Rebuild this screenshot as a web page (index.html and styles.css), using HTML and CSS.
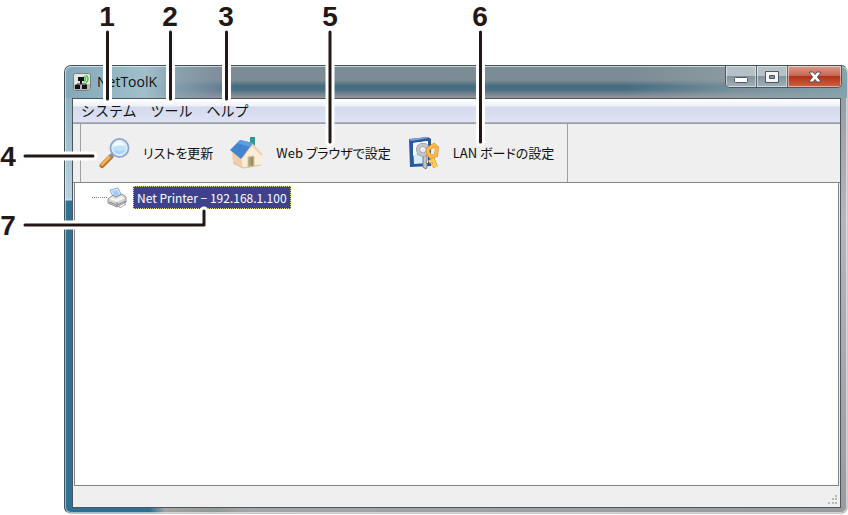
FILE: index.html
```html
<!DOCTYPE html>
<html lang="ja">
<head>
    <meta charset="UTF-8">
    <meta name="viewport" content="width=device-width, initial-scale=1.0">
    <title>NetToolK</title>
    <link rel="stylesheet" href="styles.css">
</head>
<body>

<div class="figure">
    <div class="window">
        <header class="titlebar">
            <svg class="app-icon" width="18" height="18" viewBox="0 0 18 18">
                <rect x="0.5" y="0.5" width="17" height="17" rx="2" fill="#e4e7e3" stroke="#77817f"/>
                <rect x="1" y="11" width="16" height="6" fill="#b4b8b5"/>
                <path d="M5 4h6v4H9v3H7V8H5z" fill="#111"/>
                <path d="M4 13v-2h9v2" fill="none" stroke="#333"/>
                <rect x="2" y="12" width="5" height="4" fill="#111"/>
                <rect x="9" y="12" width="5" height="4" fill="#111"/>
                <path d="M11 3q3 3 0 6M13 2q4 4 0 8" fill="none" stroke="#4fc043" stroke-width="1.5"/>
            </svg>
            <span class="title">NetToolK</span>
            <div class="controls">
                <button type="button" class="control" aria-label="最小化">
                    <svg width="14" height="14" viewBox="0 0 14 14"><rect x="0.5" y="7.5" width="13" height="5" rx="1" fill="#fff" stroke="#50565f"/></svg>
                </button>
                <button type="button" class="control" aria-label="最大化">
                    <svg width="14" height="14" viewBox="0 0 14 14"><path d="M.5 1.500h13v11H.5zM4.500 5.500h5v3h-5z" fill="#f4f4f4" fill-rule="evenodd" stroke="#50565f"/></svg>
                </button>
                <button type="button" class="control close" aria-label="閉じる">
                    <svg width="14" height="14" viewBox="0 0 14 14"><path d="M1.500 2h3.500l2 2.500L9 2h3.500v1L9.500 7l3 4v1H9L7 9.500 5 12H1.500v-1l3-4-3-4z" fill="#fff" stroke="#5a4a52"/></svg>
                </button>
            </div>
        </header>

        <main class="client">
            <nav class="menubar">
                <a href="#">システム</a>
                <a href="#">ツール</a>
                <a href="#">ヘルプ</a>
            </nav>

            <div class="rebar">
                <div class="toolbar">
                    <button type="button" class="tool">
                        <svg width="32" height="32" viewBox="0 0 32 32">
                            <path d="M4 28.500 13 19.500" stroke="#b5702c" stroke-width="5" stroke-linecap="round"/>
                            <path d="M4 27.500 12 19.500" stroke="#f5ad55" stroke-width="3" stroke-linecap="round"/>
                            <path d="m12 20 4-4" stroke="#8a8da0" stroke-width="3"/>
                            <circle cx="21.500" cy="11" r="9" fill="#bfe3f8" stroke="#93a5d0" stroke-width="2"/>
                            <circle cx="21.500" cy="11" r="7.500" fill="none" stroke="#e4f5ff"/>
                            <path d="M15 10q1-6 7-6 4 1 5 5-6-2-12 1" fill="#f2fbff"/>
                            <path d="M17 14q4 3 9 0" fill="none" stroke="#9dd4f3" stroke-width="2"/>
                        </svg>
                        <span>リストを更新</span>
                    </button>
                    <button type="button" class="tool">
                        <svg width="33" height="32" viewBox="0 0 33 32">
                            <path d="M20 0h5v11l-5-4z" fill="#2b9694"/>
                            <path d="M2 13l11 5v13L3 26z" fill="#f3cda8"/>
                            <path d="m11 19 10-13 11 11v12l-19 3z" fill="#fdecd9"/>
                            <path d="m13 31 18-3M3 26l10 5" fill="none" stroke="#c3c9a0"/>
                            <path d="m12 21 10-14 10 11" fill="none" stroke="#efcfae" stroke-width="2"/>
                            <path d="M0 13 10 3l13 3-12 16z" fill="#4384d0"/>
                            <path d="m10 3 13 3-3 4-13-4z" fill="#5f9fe2"/>
                            <path d="m18 20 6-1v10l-6 1z" fill="#a3a574" stroke="#dcc09a"/>
                            <path d="M22 20v9" stroke="#7c8259"/>
                        </svg>
                        <span>Web ブラウザで設定</span>
                    </button>
                    <button type="button" class="tool">
                        <svg width="32" height="34" viewBox="0 0 32 34">
                            <path d="M1 3 20 1l3 2v27L2 31z" fill="#2b579c"/>
                            <path d="m1 3 19-2 1 1-18 3z" fill="#78a4df"/>
                            <path d="m5 7 15-2v22L6 28z" fill="#d8edfc"/>
                            <path d="m5 7 15-2v5L5 20z" fill="#f5fbff"/>
                            <path d="M15 18v13l3 2 1-2v-3l-1-2 1-2v-6" fill="#c6c6ca" stroke="#7c7c83"/>
                            <path d="M10 13q1-4 5-4t5 4l-1 4-4 2-4-2z" fill="none" stroke="#8d8d94" stroke-width="4"/>
                            <path d="M10 13q1-4 5-4t5 4l-1 4-4 2-4-2z" fill="none" stroke="#c5c5ca" stroke-width="3"/>
                            <path d="m23 19 5 12M25 24l-4 2M27 28l-3 2" stroke="#c98a2c" stroke-width="4"/>
                            <path d="m23 19 5 12M25 24l-4 2M27 28l-3 2" stroke="#ffc95b" stroke-width="3"/>
                            <path d="M20 13l6-4 3 3-1 7-5 2-3-4z" fill="none" stroke="#c98a2c" stroke-width="4"/>
                            <path d="M20 13l6-4 3 3-1 7-5 2-3-4z" fill="none" stroke="#fdb944" stroke-width="3"/>
                        </svg>
                        <span>LAN ボードの設定</span>
                    </button>
                </div>
            </div>

            <ul class="tree">
                <li class="node">
                    <span class="branch"></span>
                    <svg width="20" height="22" viewBox="0 0 20 22">
                        <path d="m3 3 8-2 4 8-8 3z" fill="#d9ecff" stroke="#91aed8"/>
                        <path d="m5 4 5-1 3 5-5 2z" fill="#a8cdf5"/>
                        <path d="m1 12 5-4 3 2 6-3 4 3v5l-9 5-9-4z" fill="#d4d4d4" stroke="#939393"/>
                        <path d="m2 12 8 3 8-4-4-2-5 3-3-2z" fill="#f4f4f4"/>
                        <path d="m2 15 8 3v2M10 15v3l9-4" fill="none" stroke="#888"/>
                        <path d="m12 19 5-3 2 1-6 4z" fill="#fff" stroke="#aaa"/>
                    </svg>
                    <a href="#" class="selected">Net Printer − 192.168.1.100</a>
                </li>
            </ul>

            <footer class="statusbar">
                <svg width="10" height="10" viewBox="0 0 10 10">
                    <path d="M7 0h2v2H7zM4 3h2v2H4zM7 3h2v2H7zM0 7h2v2H0zM4 7h2v2H4zM7 7h2v2H7z" fill="#b8b8b8"/>
                </svg>
            </footer>
        </main>
    </div>

    <!-- numbered callouts over the window -->
    <svg class="callouts" width="520" height="240" viewBox="0 0 520 240">
        <g class="halo">
            <path d="M107.500 32v67M170.500 32v67M226.500 32v67M330 32v110M480.500 32v110M25 156h68M25 225h179v-14"/>
        </g>
        <g class="leader">
            <path d="M107.500 32v67M170.500 32v67M226.500 32v67M330 32v110M480.500 32v110M25 156h68M25 225h179v-14"/>
        </g>
        <g class="number">
            <text x="107" y="26">1</text>
            <text x="170" y="26">2</text>
            <text x="226" y="26">3</text>
            <text x="330" y="26">5</text>
            <text x="480" y="26">6</text>
            <text x="8" y="166">4</text>
            <text x="8" y="235">7</text>
        </g>
    </svg>
</div>

</body>
</html>
```
FILE: styles.css
```css
* {
    box-sizing: border-box;
}
body {
    margin: 0;
    background: #fff;
    color: #111;
    font-family: "Noto Sans CJK JP", sans-serif;
}
button {
    border: none;
    padding: 0;
    background: none;
    color: inherit;
    font: inherit;
}
a {
    color: inherit;
    text-decoration: none;
}
svg {
    display: block;
    flex: none;
}
.figure {
    position: relative;
    display: flex;
    min-height: 100vh;
    padding: 65px 0 1px 64px;
}

/* window frame */
.window {
    display: flex;
    flex: 1;
    flex-direction: column;
    padding: 0 6px 5px 7px;
    border: 1px solid #40515a;
    border-right-color: #c8cacc;
    border-bottom-color: #c5c8ca;
    border-radius: 7px;
    box-shadow: inset 0 0 0 1px rgba(255, 255, 255, 0.55);
    background:
        linear-gradient(#82a9b9 0, #b8d2df 132px, #d0e0e8 134px, #2e7293 135px) left / 8px 100% no-repeat,
        linear-gradient(90deg, #2d7093 85px, #a3a3a3 100px, #929a91 150px, #a5a5a5 180px, #9a9a9a) bottom / 100% 8px no-repeat,
        linear-gradient(#7d9ca8 0, #a5a4a9 70px, #b5b5bb 150px, #9a9b9f 100%);
}
.titlebar {
    display: flex;
    align-items: center;
    height: 32px;
    margin: 0 -6px 0 -7px;
    padding: 0 5px 0 8px;
    border-radius: 6px 6px 0 0;
    box-shadow: inset 0 1px 0 rgba(255, 255, 255, 0.6), inset 1px 0 0 rgba(255, 255, 255, 0.5);
    background:
        linear-gradient(90deg, #82a8b7, #a0bfcb 80px, rgba(140, 165, 178, 0.8) 115px, rgba(130, 145, 165, 0.6) 150px, rgba(120, 140, 155, 0) 170px),
        linear-gradient(270deg, rgba(135, 165, 175, 0.9), rgba(150, 165, 172, 0.6) 110px, rgba(120, 140, 150, 0) 220px),
        linear-gradient(#7b8c94 0, #7d8c94 14px, #456b7f 20px, #4b7085 24px, #929297 31px);
}
.title {
    flex: 1;
    margin-left: 6px;
    font: 14px/20px "Open Sans", sans-serif;
}
.controls {
    display: flex;
    align-self: flex-start;
    height: 22px;
    border: 1px solid #4b5861;
    border-top: none;
    border-radius: 0 0 5px 5px;
    overflow: hidden;
}
.control {
    display: flex;
    align-items: center;
    justify-content: center;
    width: 31px;
    border-right: 1px solid #56646c;
    box-shadow: inset 0 0 0 1px rgba(255, 255, 255, 0.5);
    background: linear-gradient(#b5c1c7 45%, #84949d 50%, #a2b1b8);
}
.close {
    width: 53px;
    border-right: none;
    background: linear-gradient(#d9998a, #c96a55 45%, #b03419 50%, #cf6240);
}

/* client area */
.client {
    display: flex;
    flex: 1;
    flex-direction: column;
    border: 1px solid #4d565c;
    background: #efefef;
}
.menubar {
    display: flex;
    gap: 14px;
    height: 24px;
    padding-left: 8px;
    border-bottom: 1px solid #aaaebf;
    background: linear-gradient(#fff, #eef1f9 7px, #d4daec 8px, #dfe4f4);
    font-size: 14px;
    line-height: 22px;
}
.rebar {
    height: 60px;
    padding-left: 7px;
    border-top: 1px solid #a0a0a0;
    border-bottom: 1px solid #80858c;
}
.toolbar {
    display: flex;
    align-items: center;
    gap: 17px;
    width: fit-content;
    height: 100%;
    padding: 0 13px 0 17px;
    border: solid #a0a0a0;
    border-width: 0 1px;
}
.tool {
    display: flex;
    align-items: center;
    gap: 13px;
    font-size: 13px;
    line-height: 20px;
    font-feature-settings: "palt";
    white-space: nowrap;
}
.tree {
    flex: 1;
    margin: 0 1px 0 1px;
    padding: 3px 0 0 17px;
    border: solid #80858c;
    border-width: 0 1px 1px;
    background: #fff;
    list-style: none;
}
.node {
    display: flex;
    align-items: center;
}
.branch {
    width: 15px;
    border-top: 1px dotted #808080;
}
.selected {
    margin-left: 6px;
    padding: 0 3px;
    border: 1px dotted #d8d890;
    background: #40418c;
    color: #fff;
    font-size: 12px;
    line-height: 21px;
    white-space: nowrap;
}
.statusbar {
    display: flex;
    align-items: flex-end;
    justify-content: flex-end;
    height: 21px;
    padding: 2px;
}

/* callouts */
.callouts {
    position: absolute;
    top: 0;
    left: 0;
    pointer-events: none;
}
.halo,
.leader {
    fill: none;
    stroke: #fff;
    stroke-width: 9px;
    stroke-linecap: round;
    stroke-linejoin: round;
}
.leader {
    stroke: #231815;
    stroke-width: 3px;
}
.number {
    fill: #231815;
    font: bold 28px "Liberation Sans", Arial, sans-serif;
    text-anchor: middle;
}
```
